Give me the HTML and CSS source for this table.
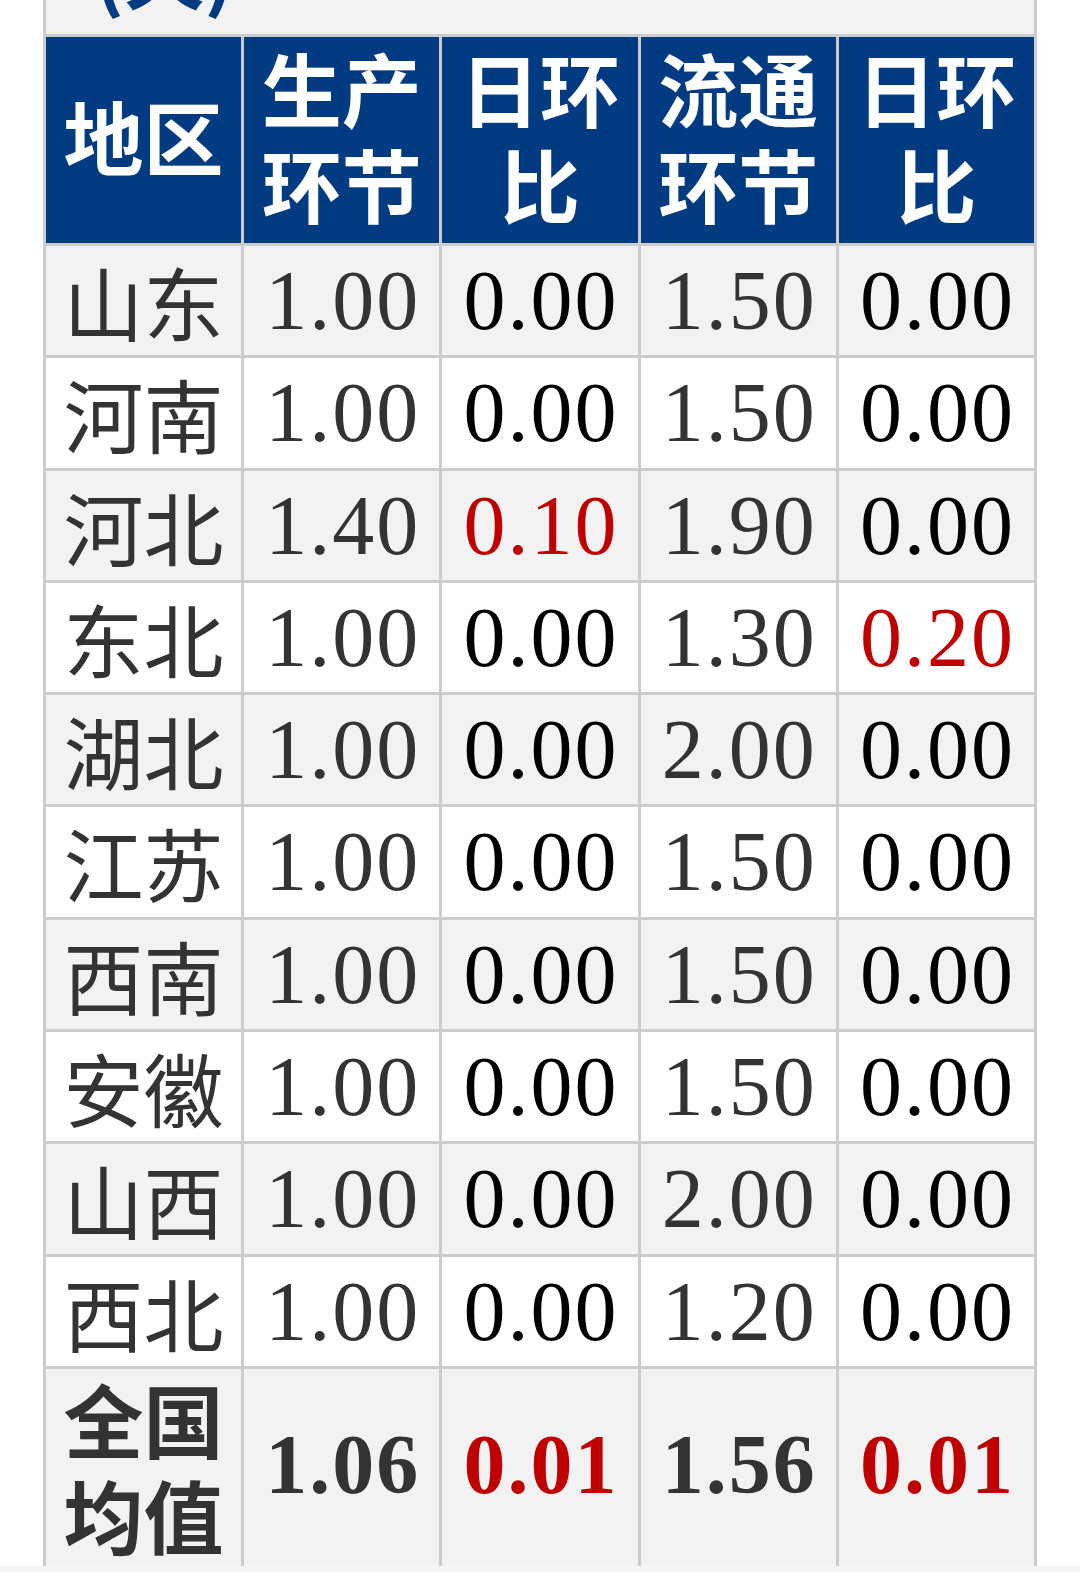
FILE: index.html
```html
<!DOCTYPE html>
<html lang="zh-CN">
<head>
<meta charset="utf-8">
<title>地区 价格环比</title>
<link rel="stylesheet" href="styles.css">
</head>
<body>
<div class="viewport">
  <div class="sheet">
    <div class="caption"><div class="caption-text">(天)</div></div>
    <table class="grid">
      <colgroup><col><col><col><col><col></colgroup>
      <thead>
        <tr>
          <th>地区</th>
          <th>生产<br>环节</th>
          <th>日环<br>比</th>
          <th>流通<br>环节</th>
          <th>日环<br>比</th>
        </tr>
      </thead>
      <tbody>
        <tr class="odd"><td class="name">山东</td><td class="val">1.00</td><td class="chg">0.00</td><td class="val">1.50</td><td class="chg">0.00</td></tr>
        <tr><td class="name">河南</td><td class="val">1.00</td><td class="chg">0.00</td><td class="val">1.50</td><td class="chg">0.00</td></tr>
        <tr class="odd"><td class="name">河北</td><td class="val">1.40</td><td class="chg up">0.10</td><td class="val">1.90</td><td class="chg">0.00</td></tr>
        <tr><td class="name">东北</td><td class="val">1.00</td><td class="chg">0.00</td><td class="val">1.30</td><td class="chg up">0.20</td></tr>
        <tr class="odd"><td class="name">湖北</td><td class="val">1.00</td><td class="chg">0.00</td><td class="val">2.00</td><td class="chg">0.00</td></tr>
        <tr><td class="name">江苏</td><td class="val">1.00</td><td class="chg">0.00</td><td class="val">1.50</td><td class="chg">0.00</td></tr>
        <tr class="odd"><td class="name">西南</td><td class="val">1.00</td><td class="chg">0.00</td><td class="val">1.50</td><td class="chg">0.00</td></tr>
        <tr><td class="name">安徽</td><td class="val">1.00</td><td class="chg">0.00</td><td class="val">1.50</td><td class="chg">0.00</td></tr>
        <tr class="odd"><td class="name">山西</td><td class="val">1.00</td><td class="chg">0.00</td><td class="val">2.00</td><td class="chg">0.00</td></tr>
        <tr><td class="name">西北</td><td class="val">1.00</td><td class="chg">0.00</td><td class="val">1.20</td><td class="chg">0.00</td></tr>
        <tr class="odd total"><td class="name">全国<br>均值</td><td class="val">1.06</td><td class="chg up">0.01</td><td class="val">1.56</td><td class="chg up">0.01</td></tr>
      </tbody>
    </table>
  </div>
</div>
<div class="bottom-strip"></div>
</body>
</html>
```

FILE: styles.css
```css
html, body {
  margin: 0;
  padding: 0;
  background: #ffffff;
}

.viewport {
  height: 1566px;
  overflow: hidden;
}

.sheet {
  margin-left: 43px;
  width: 994px;
  background: #f2f2f2;
}

.caption {
  height: 34px;
  overflow: hidden;
  border-left: 3px solid #cccccc;
  border-right: 3px solid #cccccc;
  padding-left: 48px;
}

.caption-text {
  margin-top: -80px;
  font-family: "Noto Sans CJK SC", sans-serif;
  font-weight: 700;
  font-size: 80px;
  line-height: 96px;
  color: #023b82;
}

.grid {
  width: 994px;
  border-collapse: collapse;
  table-layout: fixed;
}

.grid th,
.grid td {
  border: 3px solid #cccccc;
  padding: 0;
  text-align: center;
  vertical-align: middle;
}

.grid th {
  background: #023b82;
  color: #ffffff;
  font-family: "Noto Sans CJK SC", sans-serif;
  font-weight: 700;
  font-size: 80px;
  line-height: 96px;
  padding: 1px 0 13px;
}

.grid td {
  background: #ffffff;
  line-height: 109.3px;
}

.grid tr.odd td {
  background: #f2f2f2;
}

.name {
  font-family: "Noto Sans CJK SC", sans-serif;
  font-size: 80px;
  font-weight: 400;
  color: #333333;
}

.val,
.chg {
  font-family: "Liberation Serif", serif;
  font-size: 84px;
  letter-spacing: 2px;
  text-indent: 2px;
}

.val {
  color: #333333;
}

.chg {
  color: #000000;
}

.chg.up {
  color: #c00000;
}

.grid tr.total td {
  font-weight: 700;
  line-height: 96px;
  padding: 0 0 10px;
}

.grid tr.total td.name {
  color: #333333;
}

.bottom-strip {
  height: 6px;
  background: #f5f5f5;
}
```
